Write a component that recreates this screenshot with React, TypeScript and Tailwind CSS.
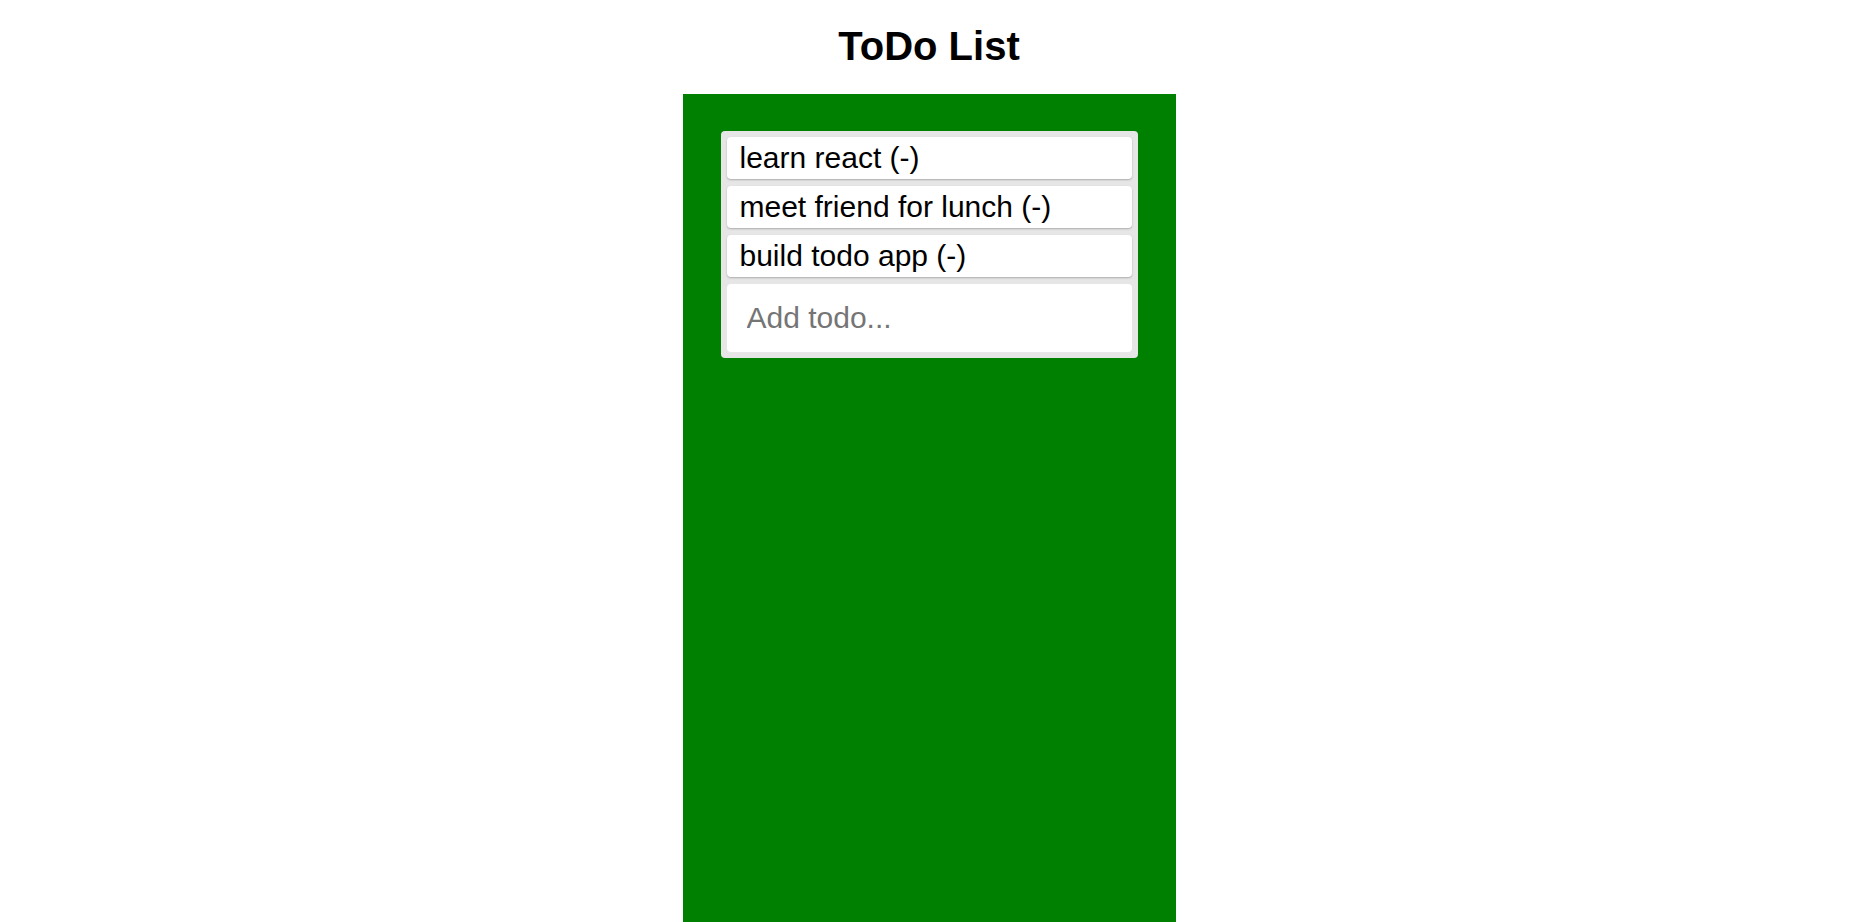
import React from "react";

const todos = ["learn react (-)", "meet friend for lunch (-)", "build todo app (-)"];

export default function App() {
  return (
    <div
      className="min-h-screen bg-white pr-[15px]"
      style={{ fontFamily: '"Liberation Sans", Arial, sans-serif' }}
    >
      <h1 className="pt-[24px] mb-[26px] text-center text-[40px] leading-[44px] font-bold text-black">
        ToDo List
      </h1>
      <div className="mx-auto w-[493px] h-[860px] bg-[#008000] pt-[37px] px-[38px]">
        <div className="rounded-[4px] bg-[#e6e6e6] p-[6px] flex flex-col gap-[7px]">
          {todos.map((t) => (
            <div
              key={t}
              className="rounded-[4px] bg-white pl-[13px] py-[4px] text-[30px] leading-[34px] text-black shadow-[0_1px_2px_rgba(0,0,0,0.25)]"
            >
              {t}
            </div>
          ))}
          <input
            type="text"
            placeholder="Add todo..."
            className="h-[68px] rounded-[4px] bg-white px-[20px] text-[30px] text-black placeholder:text-[#757575] outline-none"
          />
        </div>
      </div>
    </div>
  );
}
